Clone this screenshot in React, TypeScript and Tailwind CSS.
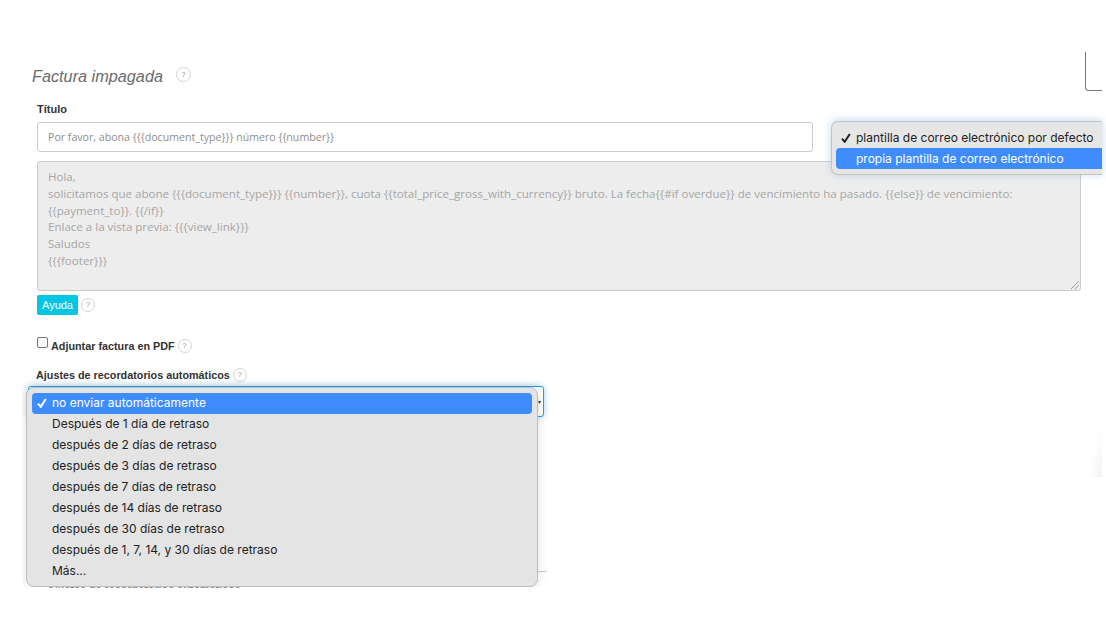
const MENU_ITEMS = [
  "Después de 1 día de retraso",
  "después de 2 días de retraso",
  "después de 3 días de retraso",
  "después de 7 días de retraso",
  "después de 14 días de retraso",
  "después de 30 días de retraso",
  "después de 1, 7, 14, y 30 días de retraso",
  "Más...",
];

const BODY_LINES = [
  "Hola,",
  "solicitamos que abone {{{document_type}}} {{number}}, cuota {{total_price_gross_with_currency}} bruto. La fecha{{#if overdue}} de vencimiento ha pasado. {{else}} de vencimiento:",
  "{{payment_to}}. {{/if}}",
  "Enlace a la vista previa: {{{view_link}}}",
  "Saludos",
  "{{{footer}}}",
];

function Hint({ className = "" }: { className?: string }) {
  return (
    <span
      className={`inline-flex h-[14px] w-[14px] items-center justify-center rounded-full border border-[#d4d4d4] bg-white font-['Liberation_Sans',sans-serif] text-[8px] font-normal text-[#9a9a9a] ${className}`}
    >
      ?
    </span>
  );
}

function Check({ className = "" }: { className?: string }) {
  return (
    <svg viewBox="0 0 10 10" className={`h-[10px] w-[10px] shrink-0 ${className}`} fill="none" stroke="currentColor" strokeWidth="2">
      <path d="M1 5.6 L3.7 8.8 L8.8 1" />
    </svg>
  );
}

export default function App() {
  return (
    <div className="relative h-[632px] w-[1106px] overflow-hidden bg-white font-['Liberation_Sans',sans-serif] text-[#333]">
      {/* corner of the box cut off at top right */}
      <div className="absolute left-[1085px] top-[52px] h-[39px] w-[17px] rounded-bl-[4px] border-b border-l border-[#777]" />

      <div className="pl-[32px] pt-[66px]">
        <div className="flex h-[20px] items-center">
          <h2 className="text-[16.25px] font-normal italic leading-[20px] text-[#6a6a70]">Factura impagada</h2>
          <Hint className="ml-[13px] -mt-[3px] h-[15px] w-[15px]" />
        </div>

        <div className="ml-[5px]">
          <label className="mt-[17px] block text-[11px] font-bold leading-[12px]">Título</label>
          <div className="mt-[7px] flex h-[30px] w-[776px] items-center rounded-[3px] border border-[#ccc] bg-white pl-[10px] pt-[2px] font-['Open_Sans',sans-serif] text-[10.62px] text-[#8e8e8e]">
            Por favor, abona {"{{{document_type}}}"} número {"{{number}}"}
          </div>

          <div className="relative mt-[9px] h-[130px] w-[1044px] rounded-[3px] border border-[#ccc] bg-[#ededed] pl-[10px] pt-[7px] font-['Open_Sans',sans-serif] text-[11.55px] leading-[16.8px] text-[#a6a6a6]">
            {BODY_LINES.map((line) => (
              <div key={line} className="whitespace-nowrap">
                {line}
              </div>
            ))}
            <svg viewBox="0 0 8 8" className="absolute bottom-[1px] right-[1px] h-[8px] w-[8px]" stroke="#555" strokeWidth="0.8" strokeDasharray="1 0.6">
              <path d="M0 8 L8 0 M4 8 L8 4" />
            </svg>
          </div>

          <div className="mt-[4px] flex items-center">
            <button className="h-[20px] w-[41px] rounded-[2px] bg-[#00c5e3] text-[11px] font-normal text-white">Ayuda</button>
            <Hint className="ml-[3px]" />
          </div>

          <div className="mt-[24px] flex h-[14px] items-center">
            <span className="-mt-[7px] h-[11px] w-[11px] rounded-[2px] border border-[#767676] bg-white" />
            <span className="ml-[3px] text-[10.8px] font-bold">Adjuntar factura en PDF</span>
            <Hint className="ml-[3px]" />
          </div>

          <div className="-ml-[1px] mt-[15px] flex h-[14px] items-center">
            <span className="text-[10.8px] font-bold">Ajustes de recordatorios automáticos</span>
            <Hint className="ml-[3px]" />
          </div>
        </div>
      </div>

      {/* focused select behind the native menu */}
      <div className="absolute left-[28px] top-[386px] h-[31px] w-[516px] rounded-[3px] border border-[#2b9fe6] bg-white shadow-[0_0_6px_rgba(43,159,230,0.45)]">
        <span className="absolute right-[2px] top-[12px] text-[6px] leading-[6px] text-[#333]">▾</span>
      </div>
      <div className="absolute left-[538px] top-[571px] h-px w-[9px] bg-[#ccc]" />
      <div className="absolute left-[1087px] top-[417px] h-[60px] w-[15px] bg-gradient-to-br from-white via-white to-[#f3f3f3]" />

      {/* label peeking out under the menu, only the tops of the letters show */}
      <div className="absolute left-[47px] top-[586px] h-[2px] w-[196px] overflow-hidden">
        <div className="-mt-[3px] whitespace-nowrap text-[10.8px] font-bold leading-[12px] text-[#888]">Ajustes de recordatorios automáticos</div>
      </div>

      {/* template select menu */}
      <div className="absolute left-[831px] top-[121px] h-[54px] w-[271px] rounded-l-[7px] border border-r-0 border-[#c4c4c4] bg-[#e6e6e6] pl-[4px] pt-[5px] font-['Inter',sans-serif] text-[12px] text-[#222] shadow-[0_-1px_8px_rgba(90,150,200,0.35)]">
        <div className="flex h-[21px] items-center whitespace-nowrap">
          <Check className="ml-[5px] mr-[5px]" />
          plantilla de correo electrónico por defecto
        </div>
        <div className="flex h-[21px] items-center whitespace-nowrap rounded-l-[4px] bg-[#3f8cff] pl-[20px] text-white">
          propia plantilla de correo electrónico
        </div>
      </div>

      {/* reminders select menu, its shadow is clipped by the capture */}
      <div className="absolute left-[22px] top-[378px] h-[209px] w-[525px] overflow-hidden">
        <div className="absolute left-[4px] top-[9px] h-[200px] w-[512px] rounded-[8px] border border-[#bdbdbd] bg-[#e4e4e4] px-[5px] pt-[5px] font-['Inter',sans-serif] text-[12px] text-[#222] shadow-[0_0_12px_rgba(0,0,0,0.12)]">
          <div className="flex h-[21px] items-center rounded-[4px] bg-[#3f8cff] pb-[1px] pl-[20px] text-white">
            <Check className="-ml-[15px] mr-[5px]" />
            no enviar automáticamente
          </div>
          <div className="-mt-[1px]">
            {MENU_ITEMS.map((item) => (
              <div key={item} className="flex h-[21px] items-center pl-[20px]">
                {item}
              </div>
            ))}
          </div>
        </div>
      </div>
    </div>
  );
}
